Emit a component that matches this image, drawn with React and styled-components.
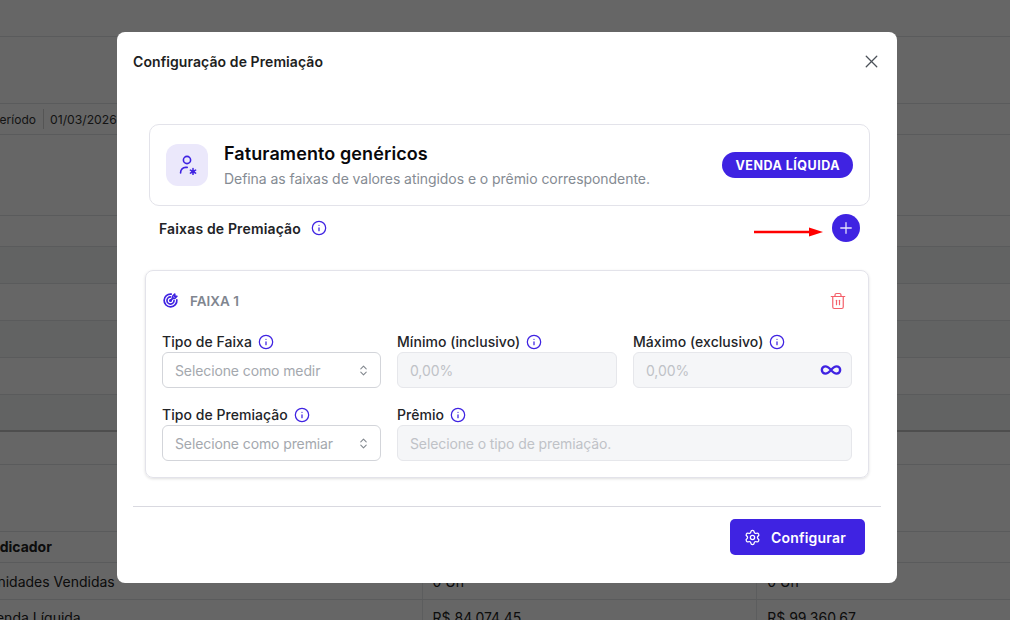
import React from 'react';
import styled, { createGlobalStyle } from 'styled-components';
import { Info, X, Plus, Trash2, ChevronsUpDown, Settings, Infinity as InfinityIcon } from 'lucide-react';
import { TbTargetArrow } from 'react-icons/tb';

const primary = '#3f23e2';

const Global = createGlobalStyle`
  html, body { margin: 0; padding: 0; width: 1010px; height: 620px; overflow: hidden; background: #fff; }
  * { box-sizing: border-box; }
  body { font-family: Inter, "Liberation Sans", sans-serif; color: #1f2023; }
`;

const Page = styled.div`
  width: 1010px;
  height: 620px;
  overflow: hidden;
`;
const Row = styled.div`
  height: ${p => p.$h}px;
  display: flex;
  align-items: center;
  border-bottom: ${p => p.$double ? '2px solid #c2c2c2' : '1px solid #e1e3e6'};
  background: ${p => p.$alt ? '#f6f8f7' : '#fff'};
  font-size: 13px;
  color: #333;
`;
const PeriodLabel = styled.span`
  margin-left: -8px;
  width: 51px;
  font-size: 12px;
  white-space: nowrap;
`;
const PeriodDivider = styled.span`
  width: 1px;
  height: 20px;
  background: #d5d5d5;
  margin-right: 6px;
`;
const PeriodValue = styled.span`
  font-size: 12.2px;
  white-space: nowrap;
`;
const Cell = styled.div`
  width: ${p => p.$w}px;
  height: 100%;
  display: flex;
  align-items: ${p => p.$top ? 'flex-start' : 'center'};
  padding-left: 10px;
  padding-top: ${p => p.$top ? 9 : 0}px;
  border-right: 1px solid #e6e8ea;
  font-size: 14px;
  white-space: nowrap;
  color: #222;
  &:first-child { margin-left: -13px; padding-left: 0; width: ${p => p.$w + 13}px; }
  &:last-child { border-right: none; }
`;
const HeadCell = styled(Cell)`
  font-weight: 700;
  padding-bottom: 2px;
`;

const Backdrop = styled.div`
  position: fixed;
  inset: 0;
  background: rgba(0, 0, 0, 0.6);
`;
const Modal = styled.div`
  position: fixed;
  left: 117px;
  top: 32px;
  width: 780px;
  height: 551px;
  background: #fff;
  border-radius: 8px;
  display: flex;
  flex-direction: column;
  padding: 0 16px;
`;
const ModalHead = styled.div`
  height: 59px;
  display: flex;
  align-items: center;
  justify-content: space-between;
`;
const ModalTitle = styled.h2`
  margin: 0;
  font-size: 14px;
  font-weight: 600;
  line-height: 18px;
  letter-spacing: 0.08px;
  color: #1d1e21;
`;
const CloseBtn = styled.span`
  display: flex;
  margin-right: -1px;
  color: #4b5058;
`;
const Summary = styled.section`
  margin: 33px 11px 0 16px;
  height: 82px;
  border: 1px solid #e3e3ea;
  border-radius: 10px;
  display: flex;
  align-items: center;
  padding: 0 16px;
`;
const SummaryIcon = styled.div`
  width: 42px;
  height: 42px;
  border-radius: 12px;
  background: #ebe8fb;
  display: flex;
  align-items: center;
  justify-content: center;
  color: ${primary};
`;
const SummaryText = styled.div`
  margin-left: 16px;
  flex: 1;
`;
const SummaryTitle = styled.div`
  font-size: 18px;
  font-weight: 600;
  line-height: 22px;
  letter-spacing: 0.1px;
  color: #08080b;
`;
const SummarySub = styled.div`
  margin-top: 5px;
  font-size: 14px;
  line-height: 18px;
  letter-spacing: -0.06px;
  color: #858b93;
`;
const Pill = styled.span`
  height: 26px;
  padding: 1px 13px 0;
  border-radius: 13px;
  background: ${primary};
  color: #fff;
  font-size: 12.5px;
  font-weight: 700;
  letter-spacing: 0.5px;
  display: flex;
  align-items: center;
`;
const RangesHead = styled.div`
  position: relative;
  margin: 8px 21px 0 26px;
  height: 28px;
  display: flex;
  align-items: center;
  justify-content: space-between;
`;
const RangesTitle = styled.div`
  display: flex;
  align-items: center;
  gap: 10px;
  font-size: 14px;
  font-weight: 600;
  letter-spacing: 0.15px;
  color: #222327;
`;
const InfoIcon = styled(Info).attrs({ size: 16, strokeWidth: 1.9 })`
  color: ${primary};
  flex: none;
`;
const AddBtn = styled.span`
  width: 28px;
  height: 28px;
  border-radius: 50%;
  background: ${primary};
  color: #e6e3fb;
  display: flex;
  align-items: center;
  justify-content: center;
`;
const Arrow = styled.svg`
  position: absolute;
  left: 595px;
  top: 12px;
`;
const RangeCard = styled.section`
  margin: 28px 12px 0 12px;
  height: 208px;
  border: 1px solid #e3e3ea;
  border-radius: 8px;
  box-shadow: 0 1px 3px rgba(0, 0, 0, 0.13);
  padding: 0 16px;
`;
const RangeHead = styled.div`
  height: 59px;
  margin-bottom: 2px;
  display: flex;
  align-items: center;
  color: ${primary};
`;
const RangeName = styled.span`
  margin-left: 10px;
  flex: 1;
  font-size: 13.5px;
  font-weight: 600;
  color: #80868f;
`;
const TargetIcon = styled(TbTargetArrow)`
  margin-right: 1px;
`;
const TrashBtn = styled.span`
  display: flex;
  margin-right: 5px;
  color: #f4606a;
`;
const FieldGrid = styled.div`
  display: grid;
  grid-template-columns: 219px 220px 219px;
  column-gap: 16px;
  row-gap: 17px;
`;
const Field = styled.div`
  grid-column: ${p => p.$span ? `span ${p.$span}` : 'auto'};
  display: flex;
  flex-direction: column;
`;
const Label = styled.label`
  height: 20px;
  display: flex;
  align-items: center;
  gap: 6px;
  font-size: 14px;
  font-weight: 500;
  letter-spacing: 0.05px;
  line-height: 20px;
  color: #232428;
`;
const Control = styled.div`
  height: 36px;
  border: 1px solid ${p => p.$disabled ? '#e6e7eb' : '#d3d5da'};
  border-radius: 6px;
  background: ${p => p.$disabled ? '#f5f6f8' : '#fff'};
  display: flex;
  align-items: center;
  justify-content: space-between;
  padding: 0 12px;
  font-size: 14px;
  letter-spacing: -0.11px;
  color: ${p => p.$disabled ? '#bfc2c7' : '#a4a8ae'};
  white-space: nowrap;
`;
const Caret = styled(ChevronsUpDown)`
  color: #83888f;
  margin-right: -2px;
`;
const Inf = styled(InfinityIcon)`
  color: ${primary};
  margin-right: -3px;
`;
const Footer = styled.div`
  margin-top: 28px;
  border-top: 1px solid #d9d9e0;
  padding: 12px 16px 0 0;
  display: flex;
  justify-content: flex-end;
`;
const ConfigBtn = styled.button`
  height: 36px;
  width: 135px;
  border: none;
  border-radius: 5px;
  background: ${primary};
  color: #fff;
  font-family: inherit;
  font-size: 14px;
  font-weight: 600;
  letter-spacing: 0.2px;
  padding: 0 0 0 14px;
  display: flex;
  align-items: center;
  gap: 10px;
`;

const rows = [
  { h: 37 }, { h: 67 },
  { h: 31, period: true },
  { h: 81 }, { h: 31 },
  { h: 37, alt: true }, { h: 37 }, { h: 37, alt: true }, { h: 37 }, { h: 37, alt: true, double: true },
  { h: 33 }, { h: 67 },
];

function UserGear() {
  return (
    <svg width="20" height="20" viewBox="0 0 20 20" fill="none" stroke="currentColor" strokeWidth="1.6" strokeLinecap="round">
      <circle cx="10" cy="5" r="3.6" />
      <path d="M3.6 18v-.6a5 5 0 0 1 5-5h1.6" />
      <circle cx="16" cy="16.6" r="1.9" fill="currentColor" stroke="none" />
      <path d="M16 13.6v1.2M16 18.4v1.2M13.4 15.1l1 .6M17.6 17.5l1 .6M13.4 18.1l1-.6M17.6 15.7l1-.6" strokeWidth="1.5" />
    </svg>
  );
}

export default function App() {
  return (
    <Page>
      <Global />
      {rows.map((r, i) => (
        <Row key={i} $h={r.h} $alt={r.alt} $double={r.double}>
          {r.period && (
            <>
              <PeriodLabel>Período</PeriodLabel>
              <PeriodDivider />
              <PeriodValue>01/03/2026</PeriodValue>
            </>
          )}
        </Row>
      ))}
      <Row $h={31}>
        <HeadCell $w={423}>Indicador</HeadCell>
        <HeadCell $w={335} />
        <HeadCell $w={253} />
      </Row>
      <Row $h={37}>
        <Cell $w={423}>Unidades Vendidas</Cell>
        <Cell $w={335}>0 Un</Cell>
        <Cell $w={253}>0 Un</Cell>
      </Row>
      <Row $h={21}>
        <Cell $w={423} $top>Venda Líquida</Cell>
        <Cell $w={335} $top>R$ 84.074,45</Cell>
        <Cell $w={253} $top>R$ 99.360,67</Cell>
      </Row>

      <Backdrop />
      <Modal>
        <ModalHead>
          <ModalTitle>Configuração de Premiação</ModalTitle>
          <CloseBtn><X size={21} strokeWidth={1.5} /></CloseBtn>
        </ModalHead>
        <Summary>
          <SummaryIcon><UserGear /></SummaryIcon>
          <SummaryText>
            <SummaryTitle>Faturamento genéricos</SummaryTitle>
            <SummarySub>Defina as faixas de valores atingidos e o prêmio correspondente.</SummarySub>
          </SummaryText>
          <Pill>VENDA LÍQUIDA</Pill>
        </Summary>
        <RangesHead>
          <RangesTitle>Faixas de Premiação <InfoIcon /></RangesTitle>
          <AddBtn><Plus size={18} strokeWidth={1.7} /></AddBtn>
          <Arrow width="70" height="12" viewBox="0 0 70 12">
            <path d="M0 6h56" stroke="#ff0000" strokeWidth="2.6" strokeLinecap="round" />
            <path d="M55 1.5l14 4.5-14 4.5z" fill="#ff0000" />
          </Arrow>
        </RangesHead>
        <RangeCard>
          <RangeHead>
            <TargetIcon size={17} strokeWidth={2.4} />
            <RangeName>FAIXA 1</RangeName>
            <TrashBtn><Trash2 size={18} strokeWidth={1.6} /></TrashBtn>
          </RangeHead>
          <FieldGrid>
            <Field>
              <Label>Tipo de Faixa <InfoIcon /></Label>
              <Control>Selecione como medir<Caret size={13} /></Control>
            </Field>
            <Field>
              <Label>Mínimo (inclusivo) <InfoIcon /></Label>
              <Control $disabled>0,00%</Control>
            </Field>
            <Field>
              <Label>Máximo (exclusivo) <InfoIcon /></Label>
              <Control $disabled>0,00%<Inf size={22} strokeWidth={2.6} /></Control>
            </Field>
            <Field>
              <Label>Tipo de Premiação <InfoIcon /></Label>
              <Control>Selecione como premiar<Caret size={13} /></Control>
            </Field>
            <Field $span={2}>
              <Label>Prêmio <InfoIcon /></Label>
              <Control $disabled>Selecione o tipo de premiação.</Control>
            </Field>
          </FieldGrid>
        </RangeCard>
        <Footer>
          <ConfigBtn><Settings size={17} strokeWidth={1.8} />Configurar</ConfigBtn>
        </Footer>
      </Modal>
    </Page>
  );
}
